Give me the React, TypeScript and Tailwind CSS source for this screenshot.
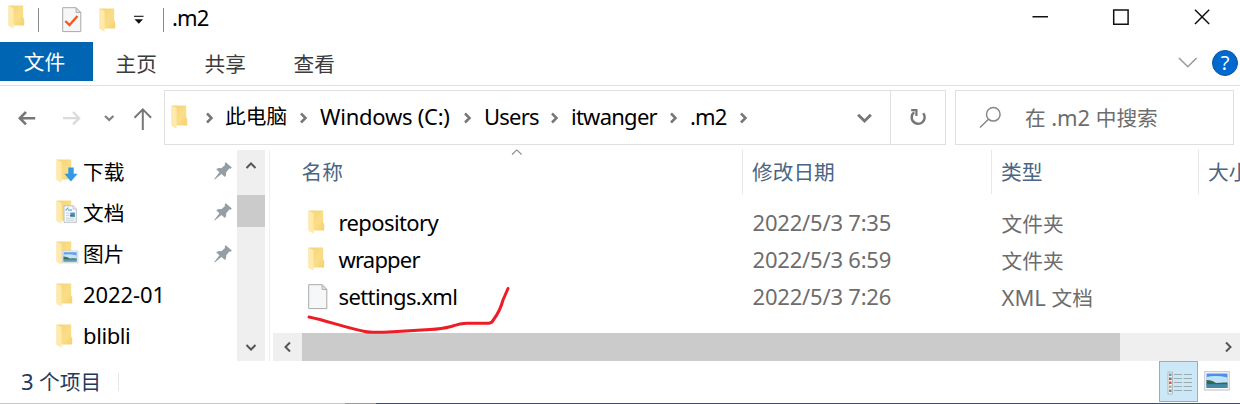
import type { ReactNode } from "react";

function Folder({ children, className = "" }: { children?: ReactNode; className?: string }) {
  return (
    <svg width="24" height="26" viewBox="0 0 24 26" className={`shrink-0 ${className}`}>
      <defs>
        <linearGradient id="folder-back" x1="0" y1="0" x2="1" y2="1">
          <stop offset="0" stopColor="#f4d27a" />
          <stop offset="0.6" stopColor="#fade87" />
          <stop offset="1" stopColor="#f5d070" />
        </linearGradient>
      </defs>
      <path d="M0.6 0.6H15.2V12.6L16.2 14V20.4H0.6Z" fill="url(#folder-back)" />
      <path d="M0.6 0.8L5.6 3V23.8L0.6 21Z" fill="#ffe9ab" />
      {children}
    </svg>
  );
}

function DownloadFolder() {
  return (
    <Folder>
      <path d="M12.3 8.6H17.7V14.8H21.6L15 22.4L8.4 14.8H12.3Z" fill="#3399e6" />
    </Folder>
  );
}

function DocumentFolder() {
  return (
    <Folder>
      <path d="M8 5.8H17.3L20.3 8.8V22.3H8Z" fill="#f7fafc" stroke="#b4bbbf" strokeWidth="0.9" />
      <path d="M17 5.8V9.2H20.3" fill="#e0e5e8" stroke="#b4bbbf" strokeWidth="0.6" />
      <path d="M9.6 10.4L12.4 7.6M12 10.2H16" stroke="#5ea9dd" strokeWidth="1.3" />
      <path d="M10 13.2H13.5M10 15.6H13.5M10 18.2H18.6M10 20.2H18.6" stroke="#b9c5cc" strokeWidth="0.8" />
      <rect x="14.3" y="12.6" width="4.6" height="4" fill="#4c8ec4" />
      <path d="M14.3 16.6V15L18.9 16V16.6Z" fill="#3a6b56" />
    </Folder>
  );
}

function PictureFolder() {
  return (
    <Folder>
      <rect x="6.3" y="10" width="15.6" height="11.8" fill="#fff" stroke="#c9cfd3" strokeWidth="0.9" />
      <rect x="7.5" y="11.2" width="13.2" height="9.4" fill="#5f9fee" />
      <path d="M7.5 13.6Q14 12.6 20.7 14.4V18H7.5Z" fill="#c3e4f8" />
      <path d="M7.5 15.4Q11 15.6 14 17.4Q18 16.8 20.7 17.6V18.8H7.5Z" fill="#3e7357" />
      <path d="M7.5 18.5H20.7V20.6H7.5Z" fill="#5f9cb4" />
    </Folder>
  );
}

function Page({ checked = false }: { checked?: boolean }) {
  return (
    <svg width="20" height="26" viewBox="0 0 20 26" className="shrink-0">
      <path d="M0.7 0.7H14L18.8 5.5V24.6H0.7Z" fill="#f6f7f8" stroke="#a9a9a9" strokeWidth="1" />
      <path d="M14 0.7V5.5H18.8Z" fill="#e2e2e2" stroke="#a9a9a9" strokeWidth="0.9" />
      {checked && <path d="M3.3 14L7.5 18L15.5 9" fill="none" stroke="#f15a24" strokeWidth="2.4" />}
    </svg>
  );
}

type Dir = "up" | "down" | "left" | "right";
const chevrons: Record<Dir, string> = {
  up: "M1.5 8L6 3.5L10.5 8",
  down: "M1.5 4L6 8.5L10.5 4",
  left: "M8 1.5L3.5 6L8 10.5",
  right: "M4 1.5L8.5 6L4 10.5",
};

function Chevron({ dir, size = 12, color = "#555", weight = 2 }: { dir: Dir; size?: number; color?: string; weight?: number }) {
  return (
    <svg width={size} height={size} viewBox="0 0 12 12" className="shrink-0">
      <path d={chevrons[dir]} fill="none" stroke={color} strokeWidth={weight} />
    </svg>
  );
}

function Pin() {
  return (
    <svg width="18" height="18" viewBox="0 0 18 18" className="shrink-0">
      <path d="M11.8 0.3L17.8 5.4L16.6 6.8L15.3 6.6L12.2 10.3Q12.6 13.2 11 15L7.4 12.1L0.8 17.6L0.3 17L5.4 10.3L2.2 7.3Q4.5 5.6 7.4 6.2L11 2.9L10.7 1.5Z" fill="#939ea5" />
    </svg>
  );
}

const crumbs = [
  { name: "此电脑", width: "w-[95px]", style: "" },
  { name: "Windows (C:)", width: "w-[164px]", style: "text-[22px] tracking-[-0.25px]" },
  { name: "Users", width: "w-[87px]", style: "text-[22px] tracking-[-0.8px]" },
  { name: "itwanger", width: "w-[119px]", style: "text-[22px] tracking-[-0.75px]" },
  { name: ".m2", width: "w-[70px]", style: "text-[22px] tracking-[-0.8px]" },
];

const places = [
  { icon: <DownloadFolder />, name: "下载", pinned: true, style: "" },
  { icon: <DocumentFolder />, name: "文档", pinned: true, style: "" },
  { icon: <PictureFolder />, name: "图片", pinned: true, style: "" },
  { icon: <Folder />, name: "2022-01", pinned: false, style: "-mt-[3px] text-[22px] tracking-[-0.1px]" },
  { icon: <Folder />, name: "blibli", pinned: false, style: "-mt-[3px] text-[22px] tracking-[-0.4px]" },
];

const files = [
  { name: "repository", tracking: "tracking-[-0.6px]", date: "2022/5/3 7:35", kind: "", type: "文件夹", folder: true },
  { name: "wrapper", tracking: "tracking-[-0.8px]", date: "2022/5/3 6:59", kind: "", type: "文件夹", folder: true },
  { name: "settings.xml", tracking: "tracking-[-0.6px]", date: "2022/5/3 7:26", kind: "XML ", type: "文档", folder: false },
];

function TitleBar() {
  return (
    <header className="flex h-[42px] items-start">
      <Folder className="ml-2 mt-[5px]" />
      <div className="ml-1.5 mt-2 h-6 w-px bg-[#8b8b8b]" />
      <div className="ml-[23px] mt-[7px]"><Page checked /></div>
      <Folder className="ml-[17px] mt-2" />
      <svg width="12" height="10" viewBox="0 0 12 10" className="ml-[10px] mt-[15px]">
        <path d="M1 1.3H10.5" stroke="#111" strokeWidth="1.1" />
        <path d="M1.5 4.2H10L5.8 8.8Z" fill="#111" />
      </svg>
      <div className="ml-[18px] mt-2 h-6 w-px bg-[#8b8b8b]" />
      <h1 className="ml-2 mt-0.5 text-[22px] leading-[30px] tracking-[-0.8px]">.m2</h1>
      <svg width="184" height="20" viewBox="0 0 184 20" className="ml-auto mr-[26px] mt-[7px]" fill="none" stroke="#111" strokeWidth="1.5">
        <path d="M2.5 9.8H18M83.7 2.9H98.1V17.2H83.7Z" />
        <path d="M165 2.8L179.2 17M179.2 2.8L165 17" />
      </svg>
    </header>
  );
}

function Ribbon() {
  return (
    <nav className="flex h-11 items-start border-b border-[#e1e1e1] text-[#3b3b3b]">
      <div className="flex h-[39px] w-[93px] items-center justify-center bg-[#0066b4] pr-1 pt-[3px] text-white">文件</div>
      <div className="ml-[22.5px] w-[89px] pt-[7px] leading-[30px]">主页</div>
      <div className="w-[89px] pt-[7px] leading-[30px]">共享</div>
      <div className="pt-[7px] leading-[30px]">查看</div>
      <svg width="20" height="12" viewBox="0 0 20 12" className="ml-auto mr-[14px] mt-[15px]">
        <path d="M1 1L9.8 9.8L18.6 1" fill="none" stroke="#999" strokeWidth="1.5" />
      </svg>
      <div className="mr-[2px] mt-[8px] flex h-[26px] w-[26px] items-center justify-center rounded-full border border-[#0a559c] bg-[#0069cd] text-[20px] leading-none text-white">?</div>
    </nav>
  );
}

function AddressRow() {
  return (
    <div className="flex h-16 items-start pt-1">
      <svg width="164" height="54" viewBox="0 0 164 54" className="shrink-0" fill="none">
        <path d="M35.2 28.2H20M26 22L19.8 28.2L26 34.4" stroke="#777" strokeWidth="2.6" />
        <path d="M63 28.2H78.5M73 22L79.2 28.2L73 34.4" stroke="#dadada" strokeWidth="2.3" />
        <path d="M105 26L109.2 30L113.4 26" stroke="#808080" strokeWidth="2.3" />
        <path d="M142.8 40V20M134.5 27.7L142.8 19.3L151.1 27.7" stroke="#777" strokeWidth="2" />
      </svg>
      <div className="flex h-[55px] w-[782px] shrink-0 items-center border border-[#e0e0e0]">
        <Folder className="ml-[6px]" />
        <div className="ml-[6px] flex w-[24px] pl-[2px]"><Chevron dir="right" color="#777" weight={2.5} /></div>
        {crumbs.map((c) => (
          <div key={c.name} className={`flex shrink-0 items-center justify-between ${c.width}`}>
            <span className={`-mt-[3px] whitespace-nowrap leading-[30px] ${c.style}`}>{c.name}</span>
            <span className="mr-[11px]">
              <Chevron dir="right" color="#777" weight={2.5} />
            </span>
          </div>
        ))}
        <div className="ml-auto mr-[17px]"><Chevron dir="down" size={17} color="#777" weight={2} /></div>
        <div className="flex h-full w-[55px] items-center justify-center border-l border-[#e0e0e0]">
          <svg width="18" height="18" viewBox="0 0 18 18" className="-mt-0.5" fill="none" stroke="#777" strokeWidth="2.5">
            <path d="M14.2 5.2A6.5 6.5 0 1 1 5.2 4.2" />
            <path d="M2.2 2.2H7.4V8" strokeWidth="2.2" />
          </svg>
        </div>
      </div>
      <div className="ml-[9px] flex h-[55px] w-[279px] shrink-0 items-center border border-[#e0e0e0] text-[#6d6d6d]">
        <svg width="24" height="24" viewBox="0 0 24 24" className="ml-[23px] shrink-0" fill="none" stroke="#888" strokeWidth="1.5">
          <circle cx="14.3" cy="8.3" r="6.8" />
          <path d="M9.5 13.2L1 21.5" />
        </svg>
        <span className="-mt-px ml-[22px] whitespace-pre leading-[30px]">在<span className="text-[22px] tracking-[-0.1px]"> .m2 </span>中搜索</span>
      </div>
    </div>
  );
}

function Sidebar() {
  return (
    <aside className="flex h-[211px] w-[270px] shrink-0 border-r border-[#f0f0f0]">
      <ul className="w-[237px] pt-px">
        {places.map((p) => (
          <li key={p.name} className="flex h-[41.3px] items-center pl-[55.5px]">
            {p.icon}
            <span className={`ml-[3.5px] leading-[30px] ${p.style}`}>{p.name}</span>
            {p.pinned && <span className="-mt-px ml-auto mr-[5.5px]"><Pin /></span>}
          </li>
        ))}
      </ul>
      <div className="flex w-7 flex-col items-center bg-[#efefef]">
        <div className="flex h-[45px] pt-[10px]"><Chevron dir="up" /></div>
        <div className="h-8 w-full bg-[#cbcbcb]" />
        <div className="mt-auto pb-[8px]"><Chevron dir="down" /></div>
      </div>
    </aside>
  );
}

function FileList() {
  return (
    <section className="relative flex min-w-0 flex-1 flex-col">
      <div className="flex h-11 shrink-0 leading-[44px] text-[#4b6584]">
        <div className="flex w-[471.5px] shrink-0 pl-[31.5px]">
          名称
          <svg width="12" height="7" viewBox="0 0 12 7" className="ml-[168px] -translate-y-px">
            <path d="M1 5.5L5.8 0.9L10.6 5.5" fill="none" stroke="#888" strokeWidth="1.1" />
          </svg>
        </div>
        <div className="w-[249px] shrink-0 border-l border-[#e8e8e8] pl-[9.5px]">修改日期</div>
        <div className="w-[207.5px] shrink-0 border-l border-[#e8e8e8] pl-[9.5px]">类型</div>
        <div className="min-w-0 flex-1 overflow-hidden whitespace-nowrap border-l border-[#e8e8e8] pl-[9px]">大小</div>
      </div>
      <div className="pt-[10px]">
        {files.map((f) => (
          <div key={f.name} className="flex h-[37px] leading-[37px] text-[#6d6d6d]">
            <div className="flex w-[482.5px] pl-[37.5px] text-black">
              <span className="w-[31px] pt-[6px]">{f.folder ? <Folder /> : <Page />}</span>
              <span className={`text-[22px] ${f.tracking}`}>{f.name}</span>
            </div>
            <div className="w-[249px] text-[22px] tracking-[-0.2px]">{f.date}</div>
            <div className="whitespace-pre pt-px"><span className="text-[22px]">{f.kind}</span>{f.type}</div>
          </div>
        ))}
      </div>
      <svg width="206" height="50" viewBox="0 0 206 50" className="absolute left-[35px] top-[134.5px]" fill="none">
        <path d="M4 32C23 36 38 42 60 46.5Q66 48 88 46.8L125 44.5Q137 44 146 41.5Q156 38.2 162 38.2H184Q187 38 189 34Q195 26 198 15L203 3.5" stroke="#ee1c25" strokeWidth="3" strokeLinecap="round" strokeLinejoin="round" />
      </svg>
      <div className="ml-[3px] mt-auto flex h-7 items-center bg-[#efefef]">
        <div className="flex w-[29px] justify-center"><Chevron dir="left" /></div>
        <div className="h-full w-[818px] bg-[#cbcbcb]" />
        <div className="ml-auto mr-1.5"><Chevron dir="right" /></div>
      </div>
    </section>
  );
}

function StatusBar() {
  return (
    <footer className="flex h-[42px] items-start">
      <span className="whitespace-pre pl-[21px] pt-[5px] leading-[30px] text-[#23395d]"><span className="text-[22px] tracking-[-0.1px]">3 </span>个项目</span>
      <div className="ml-[17px] mt-3 h-[18px] w-px bg-[#e8e8e8]" />
      <div className="ml-auto mr-[6px] flex h-[41px] w-[39px] items-center justify-center border border-[#66bfe8] bg-[#cce8f6]">
        <svg width="26" height="24" viewBox="0 0 26 24" className="ml-0.5 mt-0.5">
          <rect x="1" y="1" width="4.5" height="22" fill="#eef2f4" stroke="#a5b4bc" strokeWidth="0.8" />
          {[3.5, 7.5, 11.5, 15.5, 19.5].map((y, i) => (
            <g key={y}>
              <rect x="2" y={y - 1} width="2.6" height="2.5" fill={["#679fc8", "#87735b", "#ee5334", "#c4ae4a", "#6792b5"][i]} />
              <path d={`M7 ${y}H15M16.7 ${y}H25`} stroke="#9aabb2" strokeWidth="1.2" />
            </g>
          ))}
        </svg>
      </div>
      <svg width="26" height="20" viewBox="0 0 26 20" className="mr-[10px] mt-[10px]">
        <rect x="0.7" y="0.7" width="24.5" height="18.3" fill="#fff" stroke="#c7c9cd" strokeWidth="1.2" />
        <rect x="2.5" y="2.5" width="21" height="14.5" fill="#4f8fe5" />
        <path d="M2.5 6Q12 4 23.5 6.5V13H2.5Z" fill="#bfe3fa" />
        <path d="M2.5 9Q8 9 12 12Q19 11 23.5 11.6V13.8H2.5Z" fill="#326850" />
        <path d="M2.5 13.2H23.5V17H2.5Z" fill="#4488aa" />
      </svg>
    </footer>
  );
}

export default function App() {
  return (
    <div className="flex h-[404px] w-[1240px] flex-col overflow-hidden bg-white font-['Noto_Sans','Noto_Sans_CJK_SC',sans-serif] text-[20.7px] text-black">
      <TitleBar />
      <Ribbon />
      <AddressRow />
      <main className="flex h-[211px]">
        <Sidebar />
        <FileList />
      </main>
      <StatusBar />
      <div className="flex h-px">
        <div className="w-[345px] bg-[#c9c9c9]" />
        <div className="w-[31px] bg-[#999]" />
        <div className="flex-1 bg-[#3e4c70]" />
      </div>
    </div>
  );
}
